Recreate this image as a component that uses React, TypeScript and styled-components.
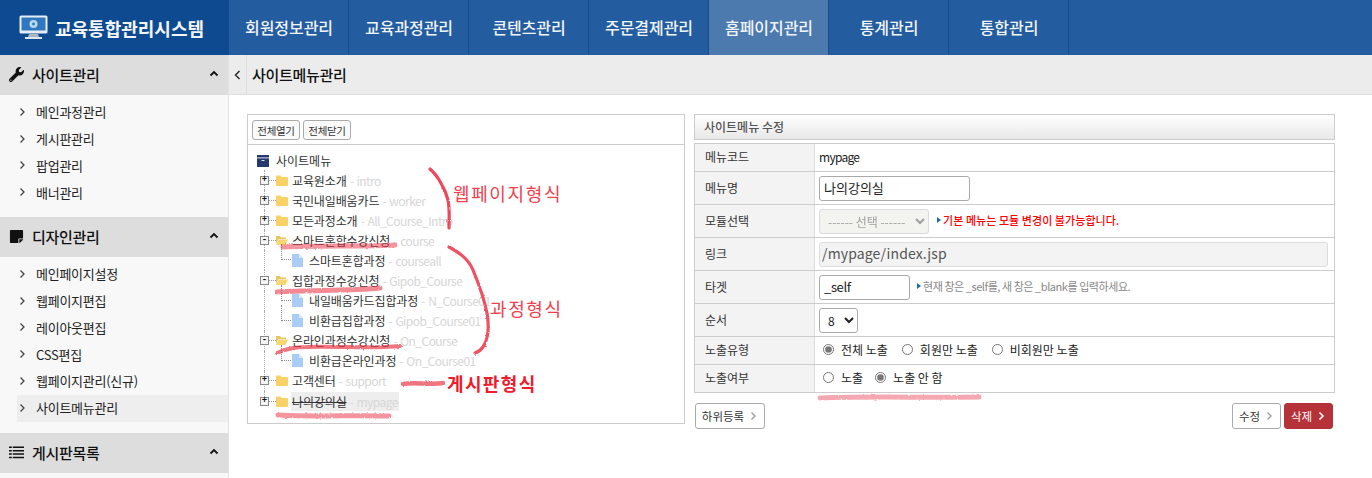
import React from "react";
import styled, { createGlobalStyle } from "styled-components";
import { FaWrench, FaStickyNote } from "react-icons/fa";

const Global = createGlobalStyle`
  html, body { margin: 0; padding: 0; background: #fff; }
  body { font-family: "Noto Sans CJK KR", "Noto Sans", sans-serif; color: #222; overflow: hidden; }
  * { box-sizing: border-box; }
`;

const Page = styled.div`position: relative; width: 1372px; height: 478px; overflow: hidden;`;
const Header = styled.header`display: flex; height: 55px; background: #235c9f;`;
const Logo = styled.div`
  width: 229px; flex: none; background: #0e4a90; color: #f2f5f9; display: flex; align-items: center;
  padding-left: 19px; gap: 7px; font-size: 18px; font-weight: 700; letter-spacing: 0;
`;
const Nav = styled.nav`display: flex;`;
const NavItem = styled.a<{ $active?: boolean }>`
  width: 120px; display: flex; align-items: center; justify-content: center; color: #f0f4f8; padding: 0 0 2px 1px;
  font-size: 16px; font-weight: 500; letter-spacing: -.005em; border-right: 1px solid #174c8c;
  background: ${(p) => (p.$active ? "#4c7aaf" : "transparent")};
`;
const Body = styled.div`display: flex; height: 423px;`;
const Sidebar = styled.aside`width: 229px; flex: none; background: #f8f8f8; border-right: 1px solid #e3e3e3;`;
const SideHead = styled.div`
  height: 40px; background: #ddd; display: flex; align-items: center; padding: 0 9px 2px; gap: 8px;
  font-size: 15px; font-weight: 500; color: #111; letter-spacing: -.02em;
  svg:first-child { width: 15px; height: 15px; }
`;
const SideTitle = styled.span`flex: 1;`;
const SideList = styled.ul<{ $bottom: number }>`list-style: none; margin: 0; padding: 4px 0 ${(p) => p.$bottom}px;`;
const SideItem = styled.li<{ $active?: boolean }>`
  height: 26.75px; display: flex; align-items: center; margin-left: 17px; gap: 9px; color: #222; padding-bottom: 1px;
  font-size: 13px; letter-spacing: -.02em; background: ${(p) => (p.$active ? "#eee" : "transparent")};
`;
const Main = styled.main`flex: 1; min-width: 0;`;
const Crumb = styled.div`height: 40px; background: #ececec; border-bottom: 1px solid #ddd; display: flex; align-items: center;`;
const Back = styled.div`width: 18px; height: 39px; border-right: 1px solid #ddd; display: flex; align-items: center; justify-content: center;`;
const CrumbTitle = styled.h1`margin: 0 0 0 5px; font-size: 15px; font-weight: 500; color: #111; letter-spacing: -.02em;`;
const Content = styled.div`display: grid; grid-template-columns: 438px 641px; gap: 9px; padding: 19px 0 0 18px;`;
const TreePanel = styled.section`height: 310px; border: 1px solid #ccc;`;
const TreeBar = styled.div`height: 30px; border-bottom: 1px solid #ccc; display: flex; gap: 3px; padding: 5px 0 0 4px;`;
const SmallBtn = styled.button`
  width: 48px; height: 20px; padding: 0; border: 1px solid #aaa; border-radius: 3px; background: #fafafa; color: #333;
  font: 400 10.5px "Noto Sans CJK KR", sans-serif; letter-spacing: -.03em;
`;
const Tree = styled.div`padding: 6px 0 0 0;`;
const TreeRoot = styled.div`height: 19px; display: flex; align-items: center; padding-left: 9px; font-size: 12px; color: #333;`;
const TreeRow = styled.div<{ $level: number }>`
  position: relative; height: 20.1px; display: flex; align-items: center;
  padding-left: ${(p) => (p.$level === 1 ? 12 : 33)}px; font-size: 12px; color: #333; white-space: nowrap;
  letter-spacing: -.01em;
  &::before { content: ""; position: absolute; left: 16px; top: 0; bottom: 0; border-left: 1px dotted #aaa; }
  &:last-child::before { bottom: 10px; }
`;
const Expander = styled.span`
  position: relative; z-index: 1; width: 9px; height: 9px; border: 1px solid #888; background: #f4f4f4; display: flex; flex: none;
  align-items: center; justify-content: center; font: 700 9px/7px "Liberation Mono", monospace; color: #111;
`;
const Dots = styled.span`width: 7px; flex: none; border-top: 1px dotted #999;`;
const ChildElbow = styled.span`
  position: absolute; left: 33px; top: -6px; width: 10px; height: 16px; border-left: 1px dotted #888; border-bottom: 1px dotted #888;
`;
const Label = styled.span<{ $sel?: boolean; $child?: boolean }>`
  margin-left: ${(p) => (p.$child ? 5 : 3)}px; padding: 1px; line-height: 17px;
  background: ${(p) => (p.$sel ? "#eee" : "transparent")};
`;
const RootLabel = styled.span`margin-left: 7px;`;
const Struck = styled.span`text-decoration: line-through;`;
const Code = styled.span`color: #d6d6d6; letter-spacing: -.045em; word-spacing: 1px;`;
const FormCol = styled.section``;
const FormTitle = styled.h2`
  margin: 0 0 3px; height: 26px; border: 1px solid #ccc; background: linear-gradient(#fff, #e8e8e8);
  font-size: 12px; font-weight: 500; color: #555; padding-left: 9px; line-height: 23px;
`;
const Table = styled.div`border: 1px solid #ccc; border-bottom: 0;`;
const Row = styled.div<{ $h: number }>`display: flex; height: ${(p) => p.$h}px; border-bottom: 1px solid #ccc;`;
const Th = styled.div`
  width: 120px; flex: none; background: #f3f3f3; border-right: 1px solid #ddd; padding: 0 0 2px 10px;
  display: flex; align-items: center; font-size: 12px; color: #333;
`;
const Td = styled.div`flex: 1; display: flex; align-items: center; padding-left: 4px; font-size: 12px; color: #222; min-width: 0;`;
const Mono = styled.span`letter-spacing: -.06em; padding-bottom: 2px;`;
const Field = styled.input<{ $w: number; $ro?: boolean; $ls?: string; $size?: number }>`
  width: ${(p) => p.$w}px; height: 25px; border: 1px solid ${(p) => (p.$ro ? "#ddd" : "#aaa")}; border-radius: 3px;
  padding: 0 ${(p) => (p.$ro ? 2 : 4)}px 2px;
  background: ${(p) => (p.$ro ? "#f3f3f3" : "#fff")}; color: ${(p) => (p.$ro ? "#555" : "#222")};
  font: 400 ${(p) => p.$size ?? 13}px "Noto Sans CJK KR", sans-serif; letter-spacing: ${(p) => p.$ls ?? "0"}; outline: none;
`;
const Sel = styled.select<{ $w: number; $off?: boolean }>`
  width: ${(p) => p.$w}px; height: 25px; border: 1px solid ${(p) => (p.$off ? "#ccc" : "#aaa")}; border-radius: 3px; padding-left: 4px;
  background-color: ${(p) => (p.$off ? "#efefe9" : "#fff")}; color: ${(p) => (p.$off ? "#777" : "#222")};
  font: 400 12px "Noto Sans CJK KR", sans-serif;
`;
const Note = styled.span<{ $danger?: boolean }>`
  display: inline-flex; align-items: center; margin-left: ${(p) => (p.$danger ? 8 : 7)}px; font-size: 11px; padding-bottom: 2px;
  font-weight: ${(p) => (p.$danger ? 500 : 400)}; color: ${(p) => (p.$danger ? "#f00" : "#888")};
  letter-spacing: ${(p) => (p.$danger ? ".005em" : "-.04em")};
  &::before { content: ""; margin-right: 2px; border-left: 4px solid #1c6bb0; border-top: 3px solid transparent; border-bottom: 3px solid transparent; }
`;
const RadioLabel = styled.label<{ $gap: number }>`
  display: inline-flex; align-items: center; margin-right: ${(p) => p.$gap}px; gap: 7px; font-size: 12px; color: #222; padding-bottom: 2px;
`;
const Radio = styled.input.attrs({ type: "radio", readOnly: true })`
  margin: 0 0 0 4px; width: 11px; height: 11px; accent-color: #777;
`;
const Actions = styled.div`display: flex; justify-content: space-between; padding: 10px 2px 0 1px;`;
const ActionGroup = styled.div`display: flex; gap: 3px;`;
const Btn = styled.button<{ $w: number; $danger?: boolean }>`
  width: ${(p) => p.$w}px; height: 26px; border-radius: 3px; padding: 0; display: flex; align-items: center; justify-content: center; gap: 4px;
  border: 1px solid ${(p) => (p.$danger ? "#b53338" : "#aaa")}; background: ${(p) => (p.$danger ? "#b53338" : "#fff")};
  color: ${(p) => (p.$danger ? "#fff" : "#333")}; font: 400 11.5px "Noto Sans CJK KR", sans-serif;
`;
const Ink = styled.svg`position: absolute; left: 0; top: 0; pointer-events: none;`;
const Callout = styled.span<{ $x: number; $y: number; $bold?: boolean }>`
  position: absolute; left: ${(p) => p.$x}px; top: ${(p) => p.$y}px; font-size: 18px; line-height: 24px;
  letter-spacing: ${(p) => (p.$bold ? ".075em" : ".09em")};
  font-weight: ${(p) => (p.$bold ? 700 : 400)}; color: ${(p) => (p.$bold ? "#ee1c2c" : "#f0404e")}; white-space: nowrap;
`;

const Chev = ({ dir, color = "#333", w = 1.3 }: { dir: "up" | "right" | "left"; color?: string; w?: number }) => {
  const d = dir === "up" ? "M1.5 6.5 5 3l3.5 3.5" : dir === "right" ? "M3.5 1.5 7 5 3.5 8.5" : "M6.5 1 2.5 5l4 4";
  return (
    <svg width="10" height="10" viewBox="0 0 10 10" fill="none" style={{ flex: "none" }}>
      <path d={d} stroke={color} strokeWidth={w} />
    </svg>
  );
};

const ListIcon = ({ color }: { color: string }) => (
  <svg viewBox="0 0 16 13" style={{ flex: "none" }}>
    <path d="M0 0h3v1.6H0zM4 0h12v1.6H4zM0 3.7h3v1.6H0zM4 3.7h12v1.6H4zM0 7.4h3V9H0zM4 7.4h12V9H4zM0 11.1h3v1.6H0zM4 11.1h12v1.6H4z" fill={color} />
  </svg>
);
const Monitor = () => (
  <svg width="29" height="25" viewBox="0 0 29 25">
    <rect x="0.5" y="0.5" width="28" height="18" rx="1.5" fill="#e8edf3" />
    <rect x="2.5" y="2.5" width="24" height="13" fill="#2f78bd" />
    <circle cx="14.5" cy="9" r="4" fill="#bcd8ef" />
    <circle cx="14.5" cy="9" r="1.4" fill="#2f78bd" />
    <path d="M10 19h9l1 3H9z" fill="#aab6c4" />
    <rect x="6" y="22" width="17" height="2" fill="#dfe5ec" />
  </svg>
);
const Archive = () => (
  <svg width="12" height="12" viewBox="0 0 12 12">
    <rect width="12" height="12" fill="#25386f" />
    <rect y="2.4" width="12" height="1" fill="#dfe3ee" />
    <rect x="4.5" y="5" width="3" height="1" fill="#dfe3ee" />
  </svg>
);
const Folder = ({ open }: { open?: boolean }) => (
  <svg width="12" height="11" viewBox="0 0 12 11" style={{ flex: "none" }}>
    {open ? (
      <>
        <path d="M0 1h4l1 1.5h5V4H2.5L0 9z" fill="#e9c560" />
        <path d="M2.8 4.5H12L9.5 10H0z" fill="#f8d66f" />
      </>
    ) : (
      <path d="M0 1.5A1 1 0 0 1 1 .5h3.5l1 1.5H11a1 1 0 0 1 1 1V10a1 1 0 0 1-1 1H1a1 1 0 0 1-1-1z" fill="#f8d266" />
    )}
  </svg>
);
const FileIcon = () => (
  <svg width="11" height="13" viewBox="0 0 11 13" style={{ flex: "none", marginLeft: 11 }}>
    <path d="M0 0h7l4 4v9H0z" fill="#a9cdf6" />
    <path d="M7 0l4 4H7z" fill="#d9e9fb" />
  </svg>
);

type Node = { name: string; code: string; level: 1 | 2; open?: boolean; sel?: boolean };
const nodes: Node[] = [
  { name: "교육원소개", code: "intro", level: 1 },
  { name: "국민내일배움카드", code: "worker", level: 1 },
  { name: "모든과정소개", code: "All_Course_Intro", level: 1 },
  { name: "스마트혼합수강신청", code: "course", level: 1, open: true },
  { name: "스마트혼합과정", code: "courseall", level: 2 },
  { name: "집합과정수강신청", code: "Gipob_Course", level: 1, open: true },
  { name: "내일배움카드집합과정", code: "N_Course01", level: 2 },
  { name: "비환급집합과정", code: "Gipob_Course01", level: 2 },
  { name: "온라인과정수강신청", code: "On_Course", level: 1, open: true },
  { name: "비환급온라인과정", code: "On_Course01", level: 2 },
  { name: "고객센터", code: "support", level: 1 },
  { name: "나의강의실", code: "mypage", level: 1, sel: true },
];

const sections = [
  { title: "사이트관리", icon: <FaWrench color="#111" />, bottom: 11, items: ["메인과정관리", "게시판관리", "팝업관리", "배너관리"] },
  { title: "디자인관리", icon: <FaStickyNote color="#111" />, bottom: 11.5, items: ["메인페이지설정", "웹페이지편집", "레이아웃편집", "CSS편집", "웹페이지관리(신규)", "사이트메뉴관리"] },
  { title: "게시판목록", icon: <ListIcon color="#111" />, bottom: 0, items: [] as string[] },
];

const strokes = [
  { d: "M430 169 C437 175 445 188 448 200 C450 210 449 220 449 228", w: 3.2, o: .85 },
  { d: "M449 247 C458 252 468 258 473 270 C478 282 484 298 487 313 C489 325 489 338 483 347 C481 350 478 352 475 353", w: 3.2, o: .8 },
  { d: "M283 247 C320 245 360 247 395 245", w: 5, o: .5 },
  { d: "M277 292 C310 290 350 291 380 288", w: 5, o: .55 },
  { d: "M277 353 C285 349 295 347 307 347 C340 346 370 349 400 346", w: 4, o: .65 },
  { d: "M403 384 C415 382 430 385 443 383", w: 4.5, o: .65 },
  { d: "M278 415 C315 417 350 415 389 416", w: 5, o: .5 },
  { d: "M820 398 C870 396 930 398 979 397", w: 5, o: .4 },
];

export default function App() {
  return (
    <Page>
      <Global />
      <Header>
        <Logo><Monitor />교육통합관리시스템</Logo>
        <Nav>
          {["회원정보관리", "교육과정관리", "콘텐츠관리", "주문결제관리", "홈페이지관리", "통계관리", "통합관리"].map((n, i) => (
            <NavItem key={n} $active={i === 4}>{n}</NavItem>
          ))}
        </Nav>
      </Header>
      <Body>
        <Sidebar>
          {sections.map(({ title, icon, items, bottom }) => (
            <React.Fragment key={title}>
              <SideHead>{icon}<SideTitle>{title}</SideTitle><Chev dir="up" color="#111" w={1.8} /></SideHead>
              {items.length > 0 && (
                <SideList $bottom={bottom}>
                  {items.map((it) => (
                    <SideItem key={it} $active={it === "사이트메뉴관리"}><Chev dir="right" color="#444" />{it}</SideItem>
                  ))}
                </SideList>
              )}
            </React.Fragment>
          ))}
        </Sidebar>
        <Main>
          <Crumb>
            <Back><Chev dir="left" color="#222" w={1.4} /></Back>
            <CrumbTitle>사이트메뉴관리</CrumbTitle>
          </Crumb>
          <Content>
            <TreePanel>
              <TreeBar><SmallBtn>전체열기</SmallBtn><SmallBtn>전체닫기</SmallBtn></TreeBar>
              <Tree>
                <TreeRoot><Archive /><RootLabel>사이트메뉴</RootLabel></TreeRoot>
                {nodes.map((n) => (
                  <TreeRow key={n.name} $level={n.level}>
                    {n.level === 1 ? (
                      <>
                        <Expander>{n.open ? "-" : "+"}</Expander>
                        <Dots />
                        <Folder open={n.open} />
                      </>
                    ) : (
                      <>
                        <ChildElbow />
                        <FileIcon />
                      </>
                    )}
                    <Label $sel={n.sel} $child={n.level === 2}>
                      {n.sel ? <Struck>{n.name}</Struck> : n.name}<Code> - {n.code}</Code>
                    </Label>
                  </TreeRow>
                ))}
              </Tree>
            </TreePanel>
            <FormCol>
              <FormTitle>사이트메뉴 수정</FormTitle>
              <Table>
                <Row $h={28}><Th>메뉴코드</Th><Td><Mono>mypage</Mono></Td></Row>
                <Row $h={33}><Th>메뉴명</Th><Td><Field $w={151} defaultValue="나의강의실" /></Td></Row>
                <Row $h={33}>
                  <Th>모듈선택</Th>
                  <Td>
                    <Sel $w={110} $off disabled><option>------ 선택 ------</option></Sel>
                    <Note $danger>기본 메뉴는 모듈 변경이 불가능합니다.</Note>
                  </Td>
                </Row>
                <Row $h={33}><Th>링크</Th><Td><Field $w={509} $ro readOnly $size={14} $ls=".01em" defaultValue="/mypage/index.jsp" /></Td></Row>
                <Row $h={33}>
                  <Th>타겟</Th>
                  <Td><Field $w={91} $ls="-.03em" defaultValue="_self" /><Note>현재 창은 _self를, 새 창은 _blank를 입력하세요.</Note></Td>
                </Row>
                <Row $h={33}><Th>순서</Th><Td><Sel $w={39} defaultValue="8"><option>8</option></Sel></Td></Row>
                <Row $h={28}>
                  <Th>노출유형</Th>
                  <Td>
                    <RadioLabel $gap={10}><Radio checked />전체 노출</RadioLabel>
                    <RadioLabel $gap={10}><Radio />회원만 노출</RadioLabel>
                    <RadioLabel $gap={0}><Radio />비회원만 노출</RadioLabel>
                  </Td>
                </Row>
                <Row $h={28}>
                  <Th>노출여부</Th>
                  <Td>
                    <RadioLabel $gap={8}><Radio />노출</RadioLabel>
                    <RadioLabel $gap={0}><Radio checked />노출 안 함</RadioLabel>
                  </Td>
                </Row>
              </Table>
              <Actions>
                <Btn $w={70}>하위등록<Chev dir="right" color="#999" /></Btn>
                <ActionGroup>
                  <Btn $w={49}>수정<Chev dir="right" color="#999" /></Btn>
                  <Btn $w={49} $danger>삭제<Chev dir="right" color="#fff" w={1.6} /></Btn>
                </ActionGroup>
              </Actions>
            </FormCol>
          </Content>
        </Main>
      </Body>
      <Ink width="1372" height="478" viewBox="0 0 1372 478" fill="none">
        <defs>
          <filter id="marker" filterUnits="userSpaceOnUse" x="0" y="0" width="1372" height="478">
            <feTurbulence type="fractalNoise" baseFrequency="0.35" numOctaves="2" seed="4" result="noise" />
            <feDisplacementMap in="SourceGraphic" in2="noise" scale="2.5" result="rough" />
            <feGaussianBlur in="rough" stdDeviation="0.6" />
          </filter>
        </defs>
        <g filter="url(#marker)">
          {strokes.map((s) => (
            <path key={s.d} d={s.d} stroke="#e8283c" strokeWidth={s.w} strokeOpacity={s.o} strokeLinecap="round" />
          ))}
        </g>
      </Ink>
      <Callout $x={453} $y={181}>웹페이지형식</Callout>
      <Callout $x={490} $y={296}>과정형식</Callout>
      <Callout $x={447} $y={371} $bold>게시판형식</Callout>
    </Page>
  );
}
